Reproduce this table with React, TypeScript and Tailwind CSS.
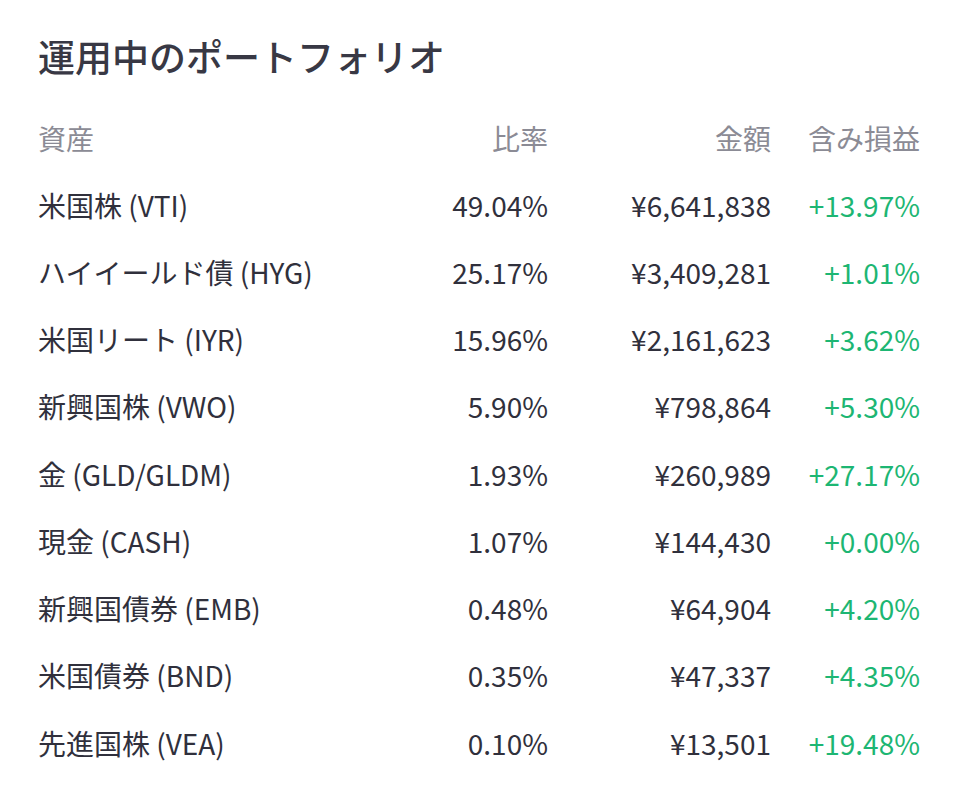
const rows = [
  { name: "米国株 (VTI)", ratio: "49.04%", amount: "¥6,641,838", pnl: "+13.97%" },
  { name: "ハイイールド債 (HYG)", ratio: "25.17%", amount: "¥3,409,281", pnl: "+1.01%" },
  { name: "米国リート (IYR)", ratio: "15.96%", amount: "¥2,161,623", pnl: "+3.62%" },
  { name: "新興国株 (VWO)", ratio: "5.90%", amount: "¥798,864", pnl: "+5.30%" },
  { name: "金 (GLD/GLDM)", ratio: "1.93%", amount: "¥260,989", pnl: "+27.17%" },
  { name: "現金 (CASH)", ratio: "1.07%", amount: "¥144,430", pnl: "+0.00%" },
  { name: "新興国債券 (EMB)", ratio: "0.48%", amount: "¥64,904", pnl: "+4.20%" },
  { name: "米国債券 (BND)", ratio: "0.35%", amount: "¥47,337", pnl: "+4.35%" },
  { name: "先進国株 (VEA)", ratio: "0.10%", amount: "¥13,501", pnl: "+19.48%" },
];

export default function App() {
  return (
    <div className="min-h-[794px] w-[958px] bg-white px-[38px] pt-[32px] text-[#30303c] [font-family:'Noto_Sans_CJK_JP','Noto_Sans',sans-serif]">
      <h1 className="whitespace-nowrap text-[37px] font-medium leading-[48px] text-[#383844]">運用中のポートフォリオ</h1>

      <div className="mt-[38px] grid grid-cols-[minmax(0,1fr)_240px_223px_149px] whitespace-nowrap text-[28px] leading-[40px] text-[#8b8b95]">
        <div>資産</div>
        <div className="text-right">比率</div>
        <div className="text-right">金額</div>
        <div className="text-right">含み損益</div>
      </div>

      <div className="mt-[13px]">
        {rows.map((r) => (
          <div
            key={r.name}
            className="grid h-[67.25px] grid-cols-[minmax(0,1fr)_240px_223px_149px] items-center whitespace-nowrap text-[28px]"
          >
            <div>{r.name}</div>
            <div className="text-right">{r.ratio}</div>
            <div className="text-right">{r.amount}</div>
            <div className="text-right text-[#1db673]">{r.pnl}</div>
          </div>
        ))}
      </div>
    </div>
  );
}
